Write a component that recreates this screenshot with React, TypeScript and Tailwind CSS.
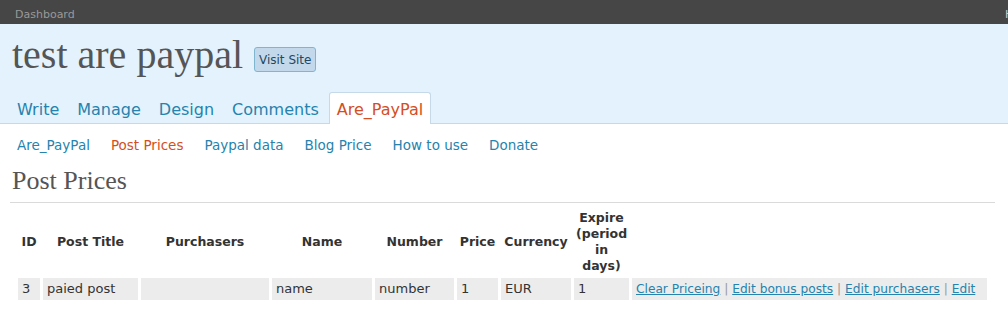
const sans = { fontFamily: '"DejaVu Sans", Verdana, sans-serif' };
const serif = { fontFamily: '"Liberation Serif", Georgia, serif' };

const tabs = ["Write", "Manage", "Design", "Comments"];
const subTabs = ["Are_PayPal", "Post Prices", "Paypal data", "Blog Price", "How to use", "Donate"];

const App = () => {
  return (
    <div className="min-h-screen w-[1008px] overflow-hidden bg-white" style={sans}>
      {/* Top bar */}
      <div className="flex h-[24px] overflow-hidden bg-[#464646] text-[11px] leading-[14px] text-[#999]">
        <span className="pl-[15px] pt-[8px]">Dashboard</span>
        <span className="ml-auto mr-[-76px] shrink-0 pt-[8px] text-[#ccc]">Howdy, admin</span>
      </div>

      {/* Blog header */}
      <div className="border-b border-[#c6d9e9] bg-[#e4f2fd]">
        <div className="flex h-[68px] items-start pl-[12px] pt-[11px]">
          <h1 className="text-[40px] leading-[40px] text-[#555]" style={serif}>
            test are paypal
          </h1>
          <button className="ml-[11px] mt-[12px] h-[25px] rounded-[3px] border border-[#80b5d0] bg-[#c3d9eb] px-[4px] text-[12px] text-[#264761]">
            Visit Site
          </button>
        </div>
        <div className="-mb-px flex h-[32px] items-stretch pl-[9px] text-[16px]">
          {tabs.map((t) => (
            <span key={t} className="mr-[2px] flex items-center px-[8px] pt-[3px] text-[#2583ad]">
              {t}
            </span>
          ))}
          <span className="flex items-center rounded-t-[3px] border border-b-0 border-[#c6d9e9] bg-white px-[7px] pt-[3px] text-[#d54e21]">
            Are_PayPal
          </span>
        </div>
      </div>

      {/* Submenu */}
      <div className="flex gap-[21px] pl-[17px] pt-[12px] text-[13.5px] leading-[18px]">
        {subTabs.map((t) => (
          <span key={t} className={t === "Post Prices" ? "text-[#d54e21]" : "text-[#2583ad]"}>
            {t}
          </span>
        ))}
      </div>

      {/* Wrap */}
      <div className="ml-[10px] mr-[13px] mt-[14px]">
        <h2
          className="border-b border-[#dadada] pb-[8px] pl-[2px] text-[26px] leading-[26px] text-[#555]"
          style={serif}
        >
          Post Prices
        </h2>

        <table className="ml-[5px] w-[975px] table-fixed border-separate border-spacing-[3px] text-[13px] leading-[16px] text-[#333]">
          <colgroup>
            <col className="w-[22px]" />
            <col className="w-[95px]" />
            <col className="w-[128px]" />
            <col className="w-[100px]" />
            <col className="w-[79px]" />
            <col className="w-[41px]" />
            <col className="w-[70px]" />
            <col className="w-[55px]" />
            <col className="w-[355px]" />
          </colgroup>
          <thead>
            <tr className="text-[12.5px] font-bold">
              <th className="px-[3px] pb-[1px] pt-[4px] text-center">ID</th>
              <th className="px-[3px] pb-[1px] pt-[4px] text-center">Post Title</th>
              <th className="px-[3px] pb-[1px] pt-[4px] text-center">Purchasers</th>
              <th className="px-[3px] pb-[1px] pt-[4px] text-center">Name</th>
              <th className="px-[3px] pb-[1px] pt-[4px] text-center">Number</th>
              <th className="px-[2px] pb-[1px] pt-[4px] text-center">Price</th>
              <th className="px-[2px] pb-[1px] pt-[4px] text-center">Currency</th>
              <th className="px-[2px] pb-[1px] pt-[4px] text-center">Expire (period in days)</th>
              <th className="px-[3px] pb-[1px] pt-[4px]"></th>
            </tr>
          </thead>
          <tbody>
            <tr>
              <td className="bg-[#ececec] px-[4px] py-[3px]">3</td>
              <td className="bg-[#ececec] px-[4px] py-[3px]">paied post</td>
              <td className="bg-[#ececec] px-[4px] py-[3px]"></td>
              <td className="bg-[#ececec] px-[4px] py-[3px]">name</td>
              <td className="bg-[#ececec] px-[4px] py-[3px]">number</td>
              <td className="bg-[#ececec] px-[4px] py-[3px]">1</td>
              <td className="bg-[#ececec] px-[4px] py-[3px]">EUR</td>
              <td className="bg-[#ececec] px-[4px] py-[3px]">1</td>
              <td className="whitespace-nowrap bg-[#ececec] px-[4px] py-[3px] text-[12.2px] text-[#999]">
                <a href="#" className="text-[#2583ad] underline">Clear Priceing</a> |{" "}
                <a href="#" className="text-[#2583ad] underline">Edit bonus posts</a> |{" "}
                <a href="#" className="text-[#2583ad] underline">Edit purchasers</a> |{" "}
                <a href="#" className="text-[#2583ad] underline">Edit</a>
              </td>
            </tr>
          </tbody>
        </table>
      </div>
    </div>
  );
};

export default App;
